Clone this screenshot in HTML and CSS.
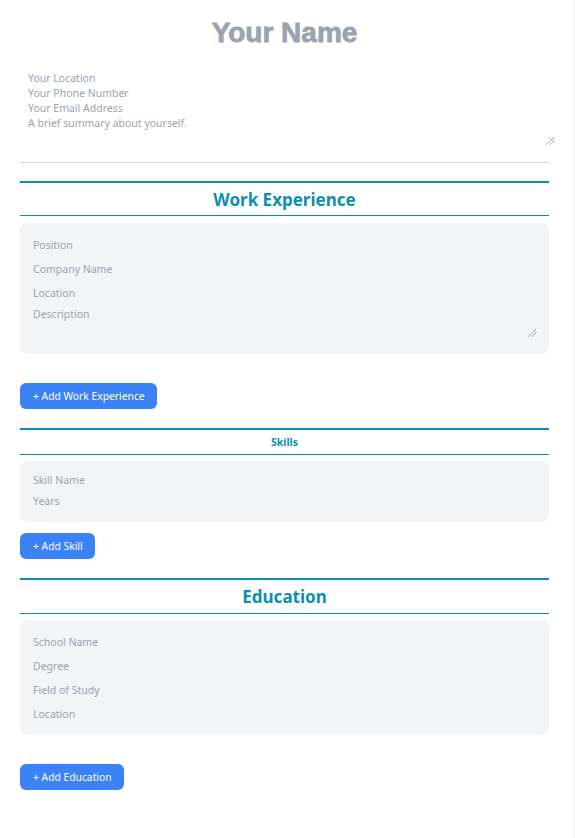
FILE: index.html
```html
<!DOCTYPE html>
<html lang="en">
<head>
<meta charset="utf-8">
<title>Resume Builder</title>
<link rel="stylesheet" href="styles.css">
</head>
<body>
<div class="page">
  <div class="name">Your Name</div>

  <div class="summary">
    <div class="line">Your Location</div>
    <div class="line">Your Phone Number</div>
    <div class="line">Your Email Address</div>
    <div class="line">A brief summary about yourself.</div>
    <svg class="grip" width="9" height="9" viewBox="0 0 9 9"><path d="M0.5 8.5 L8.5 0.5 M4 8.5 L8.5 4" stroke="#555" stroke-width="0.9" stroke-dasharray="1 0.6" fill="none"/></svg>
  </div>

  <hr class="divider">

  <section class="section">
    <h2 class="section-title">Work Experience</h2>
    <div class="card card-work">
      <div class="field">Position</div>
      <div class="field">Company Name</div>
      <div class="field">Location</div>
      <div class="field area">Description
        <svg class="grip" width="9" height="9" viewBox="0 0 9 9"><path d="M0.5 8.5 L8.5 0.5 M4 8.5 L8.5 4" stroke="#555" stroke-width="0.9" stroke-dasharray="1 0.6" fill="none"/></svg>
      </div>
    </div>
    <button class="add add-wide">+ Add Work Experience</button>
  </section>

  <section class="section section-skills">
    <h3 class="section-title small">Skills</h3>
    <div class="card card-skills">
      <div class="field short">Skill Name</div>
      <div class="field short">Years</div>
    </div>
    <button class="add add-tight">+ Add Skill</button>
  </section>

  <section class="section section-edu">
    <h2 class="section-title">Education</h2>
    <div class="card card-edu">
      <div class="field">School Name</div>
      <div class="field">Degree</div>
      <div class="field">Field of Study</div>
      <div class="field">Location</div>
    </div>
    <button class="add add-wide">+ Add Education</button>
  </section>
</div>
</body>
</html>
```

FILE: styles.css
```css
* { box-sizing: border-box; }

html, body {
  margin: 0;
  padding: 0;
  background: #ffffff;
}

body {
  font-family: "Noto Sans", "Open Sans", sans-serif;
  color: #374151;
}

.page {
  width: 575px;
  min-height: 838px;
  padding: 17px 25px 40px 20px;
  border-right: 1px solid #eceef1;
}

.name {
  font-family: "Liberation Sans", Arial, sans-serif;
  font-weight: 700;
  font-size: 28px;
  line-height: 32px;
  height: 32px;
  text-align: center;
  color: #9ca3af;
  -webkit-text-stroke: 0.8px #9ca3af;
  letter-spacing: 0;
}

.summary {
  position: relative;
  margin-top: 15px;
  width: 536px;
  height: 82px;
  padding: 7px 8px 5px;
  font-size: 10.5px;
  line-height: 15px;
  color: #9ca3af;
}

.grip {
  position: absolute;
  right: 1px;
  bottom: 1px;
  display: block;
}

.divider {
  margin: 16px 0 0;
  border: 0;
  height: 1px;
  background: #d1d5db;
}

.section-title {
  margin: 18px 0 0;
  border-top: 2px solid #0891b2;
  border-bottom: 1px solid #0891b2;
  height: 35px;
  display: flex;
  align-items: center;
  justify-content: center;
  font-size: 17px;
  font-weight: 700;
  color: #0e8fb0;
}

.section-skills .section-title,
.section-edu .section-title {
  margin-top: 19px;
}

.section-title.small {
  height: 27px;
  font-size: 10.5px;
  font-weight: 700;
}

.section-edu .section-title {
  height: 36px;
}

.card {
  margin-top: 7px;
  background: #f3f4f6;
  border-radius: 7px;
  padding: 10px 12px 8px 13px;
  box-shadow: 0 1px 1px rgba(0, 0, 0, 0.03);
}

.card-skills {
  margin-top: 6px;
  padding-top: 8px;
  padding-bottom: 10px;
}

.card-edu {
  margin-top: 6px;
}

.field {
  position: relative;
  font-size: 10.5px;
  line-height: 16px;
  padding: 4px 0;
  color: #9ca3af;
}

.field.short {
  padding: 2.5px 0;
}

.field.area {
  padding-top: 1px;
  height: 32px;
  margin-bottom: 8px;
}

.field.area .grip {
  right: 0;
  bottom: 0;
}

.add {
  display: block;
  height: 26px;
  padding: 0 12px 0 13px;
  border: 0;
  border-radius: 6px;
  background: #3b82f6;
  color: #ffffff;
  font-family: "Noto Sans", "Open Sans", sans-serif;
  font-size: 10.3px;
  line-height: 26px;
  cursor: pointer;
}

.add-wide { margin-top: 30px; }
.add-tight { margin-top: 12px; }
```
